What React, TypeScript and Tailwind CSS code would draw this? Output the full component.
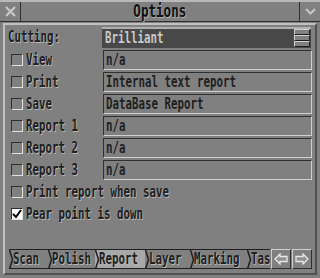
import React from "react";

const FONT = "font-['DejaVu_Sans_Mono',monospace] font-bold";

function T({ children, shadow = true }: { children: React.ReactNode; shadow?: boolean }) {
  return (
    <span
      className={`inline-block origin-left scale-x-[0.72] whitespace-nowrap leading-none text-[15px] ${
        shadow ? "[text-shadow:1px_1px_0_#b8b8b8]" : ""
      }`}
    >
      {children}
    </span>
  );
}

function Check({ checked }: { checked?: boolean }) {
  return (
    <div
      className={`w-[12px] h-[12px] shrink-0 border border-t-[#303030] border-l-[#303030] border-b-[#e0e0e0] border-r-[#e0e0e0] flex items-center justify-center ${
        checked ? "bg-white" : "bg-[#808080]"
      }`}
    >
      {checked && (
        <svg width="10" height="10" viewBox="0 0 10 10">
          <path d="M1 5 L4 8 L9 1" stroke="#000" strokeWidth="2" fill="none" />
        </svg>
      )}
    </div>
  );
}

function Field({ text }: { text: string }) {
  return (
    <div className="w-[209px] h-[20px] border border-t-[#303030] border-l-[#303030] border-b-[#d0d0d0] border-r-[#d0d0d0] flex items-center pl-[2px] text-[#202020]">
      <T shadow={false}>{text}</T>
    </div>
  );
}

function Row({ label, value, checked }: { label: string; value?: string; checked?: boolean }) {
  return (
    <div className="h-[20px] flex items-center">
      <div className={`${value !== undefined ? "w-[98px]" : "flex-1"} flex items-center pl-[6px] gap-[3px] shrink-0`}>
        <Check checked={checked} />
        <T>{label}</T>
      </div>
      {value !== undefined && <Field text={value} />}
    </div>
  );
}

function Tab({ label, active, w }: { label: string; active?: boolean; w: string }) {
  return (
    <div className={`relative h-full flex items-center ${w} shrink-0 ${active ? "bg-[#a8a8a8]" : "bg-[#808080]"}`}>
      <svg className="absolute left-0 top-0" width="5" height="19" viewBox="0 0 5 19">
        <path d="M0.5 0 L3.5 9.5 L0.5 19" stroke="#202020" strokeWidth="1.5" fill="none" />
      </svg>
      <div className="pl-[4px] text-[#202020]">
        <T>{label}</T>
      </div>
    </div>
  );
}

function ArrowBtn({ dir }: { dir: "l" | "r" }) {
  return (
    <div className="w-[20px] h-[20px] shrink-0 border border-t-[#d0d0d0] border-l-[#d0d0d0] border-b-[#303030] border-r-[#303030] bg-[#808080] flex items-center justify-center">
      <svg width="14" height="12" viewBox="0 0 14 12">
        {dir === "l" ? (
          <path d="M1 6 L6 1 L6 3.5 L13 3.5 L13 8.5 L6 8.5 L6 11 Z" stroke="#e8e8e8" strokeWidth="1.3" fill="#909090" />
        ) : (
          <path d="M13 6 L8 1 L8 3.5 L1 3.5 L1 8.5 L8 8.5 L8 11 Z" stroke="#e8e8e8" strokeWidth="1.3" fill="#909090" />
        )}
      </svg>
    </div>
  );
}

export default function App() {
  return (
    <div className={`w-[320px] h-[278px] bg-[#808080] flex flex-col overflow-hidden text-[#202020] ${FONT}`}>
      {/* Title bar */}
      <div className="h-[22px] flex border-t-2 border-t-[#b8b8b8] border-b border-b-[#303030] shrink-0">
        <div className="w-[21px] border-r border-r-[#303030] flex items-center justify-center">
          <svg width="11" height="11" viewBox="0 0 11 11">
            <path d="M1 1 L10 10 M10 1 L1 10" stroke="#c8c8c8" strokeWidth="2.2" />
          </svg>
        </div>
        <div className="flex-1 flex items-center justify-center text-[#101010]">
          <span className="inline-block scale-x-[0.74] text-[17px] leading-none [text-shadow:1px_1px_0_#b0b0b0]">Options</span>
        </div>
        <div className="w-[21px] border-l border-l-[#303030] flex items-center justify-center">
          <svg width="11" height="7" viewBox="0 0 11 7">
            <path d="M1 1 L5.5 5.5 L10 1" stroke="#c8c8c8" strokeWidth="2" fill="none" />
          </svg>
        </div>
      </div>
      {/* Frame */}
      <div className="flex-1 mx-[3px] mb-[3px] mt-[1px] border-2 border-t-[#c0c0c0] border-l-[#c0c0c0] border-b-[#505050] border-r-[#505050] flex flex-col">
        {/* Cutting */}
        <div className="h-[22px] mt-[1px] flex items-center">
          <div className="w-[97px] pl-[3px] shrink-0">
            <T>Cutting:</T>
          </div>
          <div className="w-[209px] h-[21px] bg-[#484848] border-t-2 border-t-[#b0b0b0] flex items-center justify-between pl-[3px] pr-[1px]">
            <span className="text-[#c8c8c8]">
              <T shadow={false}>Brilliant</T>
            </span>
            <div className="w-[16px] h-[19px] flex flex-col">
              <div className="flex-1 bg-[#808080] border border-t-[#d0d0d0] border-l-[#d0d0d0] border-b-[#202020] border-r-[#202020]" />
              <div className="flex-1 bg-[#808080] border border-t-[#d0d0d0] border-l-[#d0d0d0] border-b-[#202020] border-r-[#202020]" />
              <div className="flex-1 bg-[#808080] border border-t-[#d0d0d0] border-l-[#d0d0d0] border-b-[#202020] border-r-[#202020]" />
            </div>
          </div>
        </div>
        <div className="flex flex-col gap-[2px] mt-[2px]">
          <Row label="View" value="n/a" />
          <Row label="Print" value="Internal text report" />
          <Row label="Save" value="DataBase Report" />
          <Row label="Report 1" value="n/a" />
          <Row label="Report 2" value="n/a" />
          <Row label="Report 3" value="n/a" />
          <Row label="Print report when save" />
          <Row label="Pear point is down" checked />
        </div>
        {/* Tabs */}
        <div className="mt-auto mb-[4px] flex items-center pl-[4px] pr-[3px] gap-[1px]">
          <div className="h-[20px] flex-1 flex overflow-hidden border-y border-y-[#202020]">
            <Tab label="Scan" w="w-[39px]" />
            <Tab label="Polish" w="w-[47px]" />
            <Tab label="Report" w="w-[50px]" active />
            <Tab label="Layer" w="w-[45px]" />
            <Tab label="Marking" w="w-[57px]" />
            <Tab label="Tas" w="w-[40px]" />
          </div>
          <ArrowBtn dir="l" />
          <ArrowBtn dir="r" />
        </div>
      </div>
    </div>
  );
}
